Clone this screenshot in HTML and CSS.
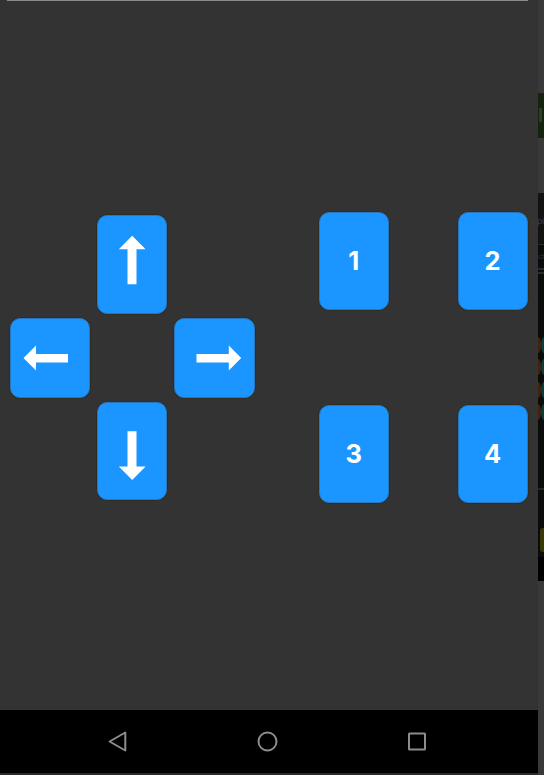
FILE: index.html
```html
<!DOCTYPE html>
<html lang="en">
<head>
<meta charset="utf-8">
<title>Remote control</title>
<link rel="stylesheet" href="styles.css">
</head>
<body>
<div class="device">
  <div class="top-line"></div>
  <main class="controls">
    <div class="dpad">
      <button class="key up" aria-label="Up"><svg width="70" height="98" viewBox="0 0 70 98"><path d="M35.2 19.8L48.6 33.2H39.5V68.3H30.5V33.2H21.8Z"/></svg></button>
      <button class="key left" aria-label="Left"><svg width="80" height="80" viewBox="0 0 80 80"><path d="M13.5 40L26 27.6V36H58V44.5H26V52.4Z"/></svg></button>
      <button class="key right" aria-label="Right"><svg width="80" height="80" viewBox="0 0 80 80"><path d="M66.2 40L53.8 27.6V36H21.5V44.5H53.8V52.4Z"/></svg></button>
      <button class="key down" aria-label="Down"><svg width="70" height="98" viewBox="0 0 70 98"><path d="M35.2 78L48.6 64.5H39.5V29.2H30.5V64.5H21.8Z"/></svg></button>
    </div>
    <div class="numpad">
      <button class="key">1</button>
      <button class="key">2</button>
      <button class="key">3</button>
      <button class="key">4</button>
    </div>
  </main>
  <nav class="navbar">
    <svg width="20" height="22" viewBox="0 0 20 22"><path d="M17.3 2.5V20.5L1.6 11.5Z"/></svg>
    <svg width="22" height="22" viewBox="0 0 22 22"><circle cx="10.5" cy="11.5" r="9"/></svg>
    <svg width="20" height="20" viewBox="0 0 20 20"><rect x="2" y="2.4" width="16" height="16" rx=".5"/></svg>
  </nav>
</div>
<aside class="edge">
  <div class="banner"><i></i></div>
  <div class="panel">
    <span class="word">pi</span>
    <span class="small">ct</span>
    <div class="dots">
      <i></i><b></b><i></i><b></b><i></i><b></b><i></i><b></b>
    </div>
    <div class="rule"></div>
    <div class="chip"></div>
    <div class="base"></div>
  </div>
</aside>
</body>
</html>
```
FILE: styles.css
```css
* { box-sizing: border-box; }
body {
  margin: 0;
  width: 544px;
  height: 775px;
  display: flex;
  overflow: hidden;
  background: #2b2b2b;
  font-family: "Liberation Sans", Arial, sans-serif;
}
.device {
  width: 538px;
  height: 773px;
  display: flex;
  flex-direction: column;
  background: #333;
}
.top-line { height: 1px; margin: 0 10px 0 7px; background: #8b8b8b; }
.controls {
  flex: 1;
  display: flex;
  justify-content: space-between;
  align-items: flex-start;
  padding: 211px 10px 0;
}
.dpad {
  display: grid;
  grid-template-columns: 80px 70px 80px;
  grid-template-rows: 99px 80px 98px;
  column-gap: 7.2px;
  row-gap: 4px;
  padding-top: 3px;
}
.up { grid-area: 1 / 2; }
.left { grid-area: 2 / 1; }
.right { grid-area: 2 / 3; }
.down { grid-area: 3 / 2; }
.numpad {
  display: grid;
  grid-template-columns: 70px 70px;
  grid-template-rows: 98px 98px;
  column-gap: 68.7px;
  row-gap: 95px;
}
.key {
  display: flex;
  align-items: center;
  justify-content: center;
  padding: 0;
  border: 1px solid #2677c0;
  border-radius: 10px;
  background: #1b95ff;
  box-shadow: 0 0 0 .5px #33270f;
  color: #fff;
  font: bold 25.5px Inter, "Liberation Sans", sans-serif;
}
.key svg { flex: none; fill: #fff; }
.right { width: 80.5px; }
.numpad .key { padding: 0 1px 2px 0; }
.navbar {
  height: 63px;
  display: flex;
  align-items: center;
  justify-content: space-between;
  padding: 0 111px 1px 108px;
  background: #000;
}
.navbar svg {
  fill: none;
  stroke: #8c8c8c;
  stroke-width: 2;
  stroke-linejoin: round;
}
.edge { width: 6px; height: 775px; background: #393939; overflow: hidden; }
.banner { height: 45px; margin-top: 93px; padding-top: 15px; background: #14250d; }
.banner i { display: block; width: 3px; height: 14px; margin-left: 1px; background: #343832; }
.panel {
  display: flex;
  flex-direction: column;
  height: 388px;
  margin-top: 55px;
  background: #0b0b0b;
  overflow: hidden;
}
.word, .small { display: block; flex: none; width: 12px; color: #414141; }
.word {
  height: 52px;
  padding-top: 20px;
  border-bottom: 1px solid #292929;
  background: #121212;
  font-size: 9px;
  line-height: 16px;
  text-indent: -1px;
}
.small {
  height: 29px;
  padding-top: 7px;
  border-bottom: 6px double #292929;
  color: #303030;
  font-size: 8px;
  line-height: 10px;
}
.dots {
  display: grid;
  grid-template-columns: 3px 3px;
  grid-auto-rows: 16px;
  row-gap: 6.3px;
  margin-top: 63px;
}
.dots i { background: #42230d; border-radius: 0 3px 3px 0 / 0 8px 8px 0; }
.dots b { background: #073d3d; border-radius: 3px 0 0 3px / 8px 0 0 8px; }
.rule { height: 2px; margin-top: 68px; background: #252525; }
.chip { height: 24px; margin: 38px 0 0 2px; border-radius: 3px 0 0 3px; background: #393906; }
.base { flex: 1; margin-top: 5px; background: #000; }
```
